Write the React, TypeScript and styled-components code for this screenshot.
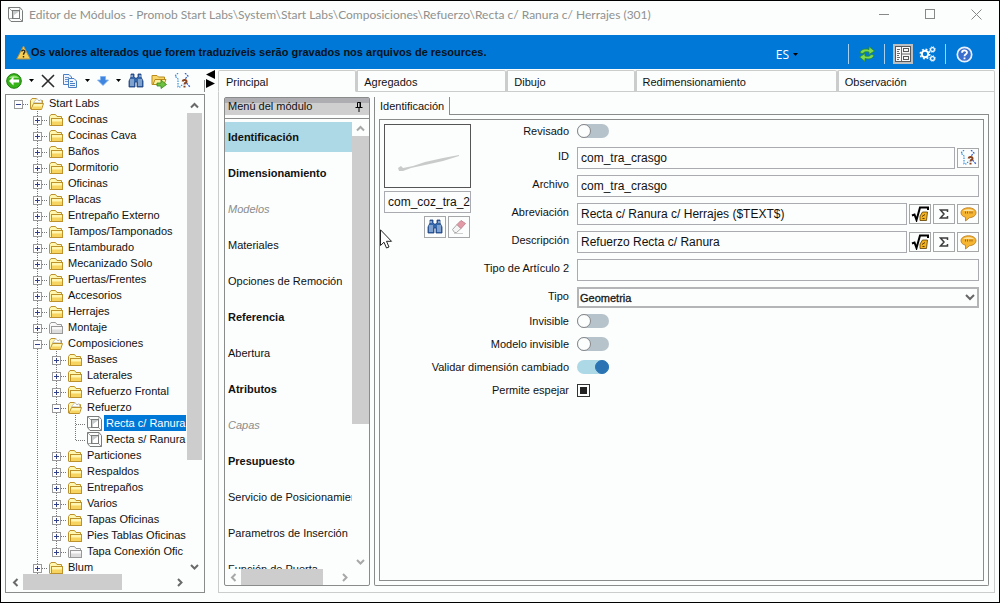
import React, { useState } from "react";
import styled, { createGlobalStyle, css } from "styled-components";

const BG = "#fcfefd";
const LINE = "#8a8c8b";
const SOFT = "#cbcdcc";
const THUMB = "#cdcdcd";
const BLUE = "#0078d7";

const GlobalStyle = createGlobalStyle`
  *, *::before { box-sizing: border-box; }
  body { margin: 0; background: ${BG}; }
  body, button, input, select {
    font-family: "Liberation Sans", Arial, sans-serif;
    font-size: 11px;
    color: #111;
  }
  button { padding: 0; border: 0; background: none; }
  svg { display: block; flex: none; }
`;

/* ---------- window frame ---------- */

const Window = styled.div`
  height: 100vh;
  min-height: 400px;
  display: flex;
  flex-direction: column;
  border: 1px solid #000;
  background: ${BG};
  overflow: hidden;
`;

const TitleBar = styled.header`
  flex: none;
  height: 34px;
  display: flex;
  align-items: flex-start;
  padding-left: 7px;
`;

const Title = styled.h1`
  flex: 1;
  margin: 0 0 0 6px;
  font: 400 12px/28px Lato, sans-serif;
  color: #8f9190;
  white-space: nowrap;
  overflow: hidden;
`;

const TitleIcon = styled.span`
  padding-top: 6px;
`;

const WindowButton = styled.button`
  width: 46px;
  height: 26px;
  display: flex;
  align-items: center;
  justify-content: center;
`;

const Banner = styled.div`
  flex: none;
  height: 34px;
  margin: 0 4px;
  padding: 0 21px 0 11px;
  display: flex;
  align-items: center;
  background: ${BLUE};
`;

const BannerText = styled.strong`
  flex: 1;
  font-size: 11px;
  white-space: nowrap;
  color: #06121c;
`;

const LanguageButton = styled.button`
  display: flex;
  align-items: center;
  gap: 4px;
  margin-right: 43px;
  padding-top: 5px;
  color: #fff;
  font: 12px/18px "Open Sans", sans-serif;
`;

const BannerButton = styled.button<{ $active?: boolean }>`
  width: 20px;
  height: 20px;
  margin-top: 4px;
  display: flex;
  align-items: center;
  justify-content: center;
  background: ${(p) => (p.$active ? "#bcc0c2" : "none")};
  margin-right: ${(p) => (p.$active ? 5 : 0)}px;
`;

const BannerRule = styled.span`
  width: 1px;
  height: 20px;
  margin: 4px 8px 0 7px;
  background: #a8d0f0;
`;

const Body = styled.main`
  flex: 1;
  min-height: 0;
  display: flex;
  padding: 0 4px 9px;
`;

/* ---------- left pane ---------- */

const LeftPane = styled.section`
  flex: none;
  width: 200px;
  display: flex;
  flex-direction: column;
`;

const Toolbar = styled.div`
  flex: none;
  height: 25px;
  display: flex;
  align-items: center;
  padding: 0 0 2px 1px;
`;

const ToolbarRule = styled.span`
  align-self: flex-end;
  margin-left: auto;
  width: 1px;
  height: 12px;
  background: ${LINE};
`;

const ToolButton = styled.button<{ $gap?: number }>`
  display: flex;
  align-items: center;
  margin-right: ${(p) => p.$gap ?? 7}px;
`;

const Frame = styled.div`
  flex: 1;
  min-width: 0;
  min-height: 0;
  display: flex;
  flex-direction: column;
  border: 1px solid ${LINE};
`;

const TreeFrame = styled(Frame)`
  padding: 0 2px 2px 1px;
`;

const ScrollRow = styled.div`
  flex: 1;
  min-height: 0;
  display: flex;
`;

const Viewport = styled.div`
  flex: 1;
  min-width: 0;
  overflow: hidden;
`;

const TreeList = styled.ul`
  list-style: none;
  margin: 0;
  padding: 0 1px 0 2px;
`;

const TreeRow = styled.li`
  height: 16px;
  display: flex;
  white-space: nowrap;
  overflow: hidden;
`;

const TreeIcon = styled.span`
  margin: 1px 3px 0 2px;
`;

const TreeText = styled.span<{ $selected?: boolean; $leaf?: boolean }>`
  line-height: 16px;
  height: 16px;
  padding: 0 0 0 2px;
  margin-left: ${(p) => (p.$leaf ? "-1px" : "0")};
  ${(p) =>
    p.$selected &&
    css`
      background: ${BLUE};
      color: #fff;
      flex: 1;
    `}
`;

/* ---------- scroll bars ---------- */

const Bar = styled.div<{ $horizontal?: boolean; $inset?: number; $narrow?: boolean }>`
  flex: none;
  display: flex;
  align-items: stretch;
  flex-direction: ${(p) => (p.$horizontal ? "row" : "column")};
  ${(p) =>
    p.$horizontal
      ? css`height: 16px; margin-right: ${p.$inset ?? 0}px;`
      : css`width: ${p.$narrow ? 15 : 17}px; margin-top: ${p.$inset ?? 0}px;`}
`;

const BarArrow = styled.span`
  min-width: 15px;
  flex: 0 0 16px;
  display: flex;
  align-items: center;
  justify-content: center;
`;

const Track = styled.span<{ $horizontal?: boolean }>`
  flex: 1;
  display: flex;
  flex-direction: ${(p) => (p.$horizontal ? "row" : "column")};
`;

const Thumb = styled.span<{ $size: number }>`
  flex: 0 0 ${(p) => p.$size}%;
  background: ${THUMB};
`;

const ARROWS = {
  up: "M1 6.5 4.5 3 8 6.5",
  down: "M1 3 4.5 6.5 8 3",
  left: "M6.5 1 3 4.5 6.5 8",
  right: "M3 1 6.5 4.5 3 8",
};

function Arrow({ to, color }: { to: keyof typeof ARROWS; color: string }) {
  return (
    <BarArrow>
      <svg width="9" height="9" viewBox="0 0 9 9">
        <path d={ARROWS[to]} fill="none" stroke={color} strokeWidth="2" />
      </svg>
    </BarArrow>
  );
}

type ScrollBarProps = { horizontal?: boolean; narrow?: boolean; size: number; inset?: number; color?: string };

function ScrollBar({ horizontal, narrow, size, inset, color = "#6a6a6a" }: ScrollBarProps) {
  return (
    <Bar $horizontal={horizontal} $inset={inset} $narrow={narrow} aria-hidden="true">
      <Arrow to={horizontal ? "left" : "up"} color={color} />
      <Track $horizontal={horizontal}>
        <Thumb $size={size} />
      </Track>
      <Arrow to={horizontal ? "right" : "down"} color={color} />
    </Bar>
  );
}

/* ---------- splitter ---------- */

const Splitter = styled.div`
  flex: none;
  width: 13px;
  padding: 1px 0 0 1px;
`;

/* ---------- right pane ---------- */

const RightPane = styled.section`
  flex: 1;
  min-width: 0;
  display: flex;
  flex-direction: column;
  padding-top: 1px;
`;

const Tabs = styled.div`
  flex: none;
  display: flex;
  height: 22px;
`;

const Tab = styled.button<{ $weight: number; $active?: boolean }>`
  flex: ${(p) => p.$weight} 1 0;
  min-width: 0;
  padding: 2px 0 0 ${(p) => (p.$active ? 7 : 6)}px;
  text-align: left;
  white-space: nowrap;
  overflow: hidden;
  border: 1px solid ${SOFT};
  border-left-width: ${(p) => (p.$active ? 1 : 2)}px;
  border-bottom-color: ${(p) => (p.$active ? "transparent" : SOFT)};
  border-radius: 2px 2px 0 0;
`;

const TabBody = styled.div`
  flex: 1;
  min-height: 0;
  display: flex;
  gap: 4px;
  padding: 5px 5px 6px;
  border: 1px solid ${SOFT};
  border-top: 0;
`;

const MenuFrame = styled(Frame)`
  flex: 0 0 146px;
  border-radius: 2px;
`;

const MenuHeader = styled.h2`
  flex: none;
  height: 17px;
  margin: 0 0 3px;
  padding: 0 6px 0 3px;
  display: flex;
  align-items: center;
  justify-content: space-between;
  font-size: 11px;
  font-weight: 400;
  line-height: 19px;
  background: linear-gradient(#aeaeb2 5px, #cfcfcf 5px);
`;

const MenuScroll = styled(ScrollRow)`
  border-top: 1px solid ${LINE};
`;

const MenuList = styled.nav`
  display: flex;
  flex-direction: column;
  gap: 6px;
  padding-top: 3px;
`;

const MenuItem = styled.a<{ $kind?: string; $current?: boolean }>`
  flex: none;
  height: 30px;
  padding-left: 3px;
  line-height: 30px;
  white-space: nowrap;
  text-decoration: none;
  color: ${(p) => (p.$kind === "off" ? "#8b8d8c" : "#111")};
  font-style: ${(p) => (p.$kind === "off" ? "italic" : "normal")};
  font-weight: ${(p) => (p.$kind === "bold" ? 700 : 400)};
  background: ${(p) => (p.$current ? "#add8e6" : "none")};
`;

const Page = styled.div`
  flex: 1;
  min-width: 0;
  display: flex;
  flex-direction: column;
`;

const PageTabs = styled.div`
  flex: none;
  height: 18px;
  display: flex;
`;

const PageTab = styled.button`
  padding: 0 5px;
  border: solid ${LINE};
  border-width: 0 1px;
`;

const PageTabRule = styled.span`
  flex: 1;
  border-bottom: 1px solid ${LINE};
`;

const PageBody = styled.div`
  flex: 1;
  min-height: 0;
  display: flex;
  padding: 4px;
  border: solid ${LINE};
  border-width: 0 1px 1px;
  border-radius: 0 0 2px 2px;
`;

const Sheet = styled.div`
  position: relative;
  flex: 1;
  min-width: 0;
  display: grid;
  grid-template-columns: 189px 1fr;
  align-content: start;
  border: 1px solid ${LINE};
`;

/* ---------- preview ---------- */

const Preview = styled.div`
  grid-area: 1 / 1 / 2 / 2;
  width: 91px;
  padding: 4px 0 0 4px;
  display: flex;
  flex-direction: column;
  gap: 3px;
  z-index: 1;
  align-self: start;
`;

const Thumbnail = styled.div`
  height: 64px;
  border: 1px solid #555;
`;

const ButtonRow = styled.div`
  display: flex;
  gap: 2px;
  justify-content: flex-end;
  padding-right: 1px;
`;

const IconButton = styled.button`
  flex: none;
  width: 22px;
  height: 20px;
  display: flex;
  align-items: center;
  justify-content: center;
  border: 1px solid #a5a7a8;
  background: ${BG};
`;

const PreviewButton = styled(IconButton)`
  height: 22px;
`;

const Pointer = styled.div`
  position: absolute;
  left: 0;
  top: 109px;
  z-index: 2;
`;

/* ---------- form ---------- */

const Form = styled.form`
  grid-area: 1 / 1 / 2 / 3;
  display: flex;
  flex-direction: column;
`;

const FieldGroup = styled.div`
  display: flex;
  flex-direction: column;
  gap: 6px;
  padding: 4px 0 1px;
`;

const FormRow = styled.div<{ $toggle?: boolean }>`
  display: grid;
  grid-template-columns: 189px 1fr;
  column-gap: 8px;
  padding-right: 4px;
  height: 22px;
  margin-bottom: ${(p) => (p.$toggle ? 1 : 0)}px;
  align-items: ${(p) => (p.$toggle ? "center" : "start")};
`;

const Label = styled.label`
  text-align: right;
  line-height: 18px;
  white-space: nowrap;
`;

const Controls = styled.div`
  display: flex;
  align-items: center;
  gap: 2px;
  min-width: 0;
`;

const TextBox = styled.input`
  flex: 1;
  width: 100%;
  min-width: 0;
  height: 22px;
  padding: 0 3px;
  border: 1px solid #a9abb0;
  background: ${BG};
  font-size: 12px;
  outline: none;
`;

const ImageName = styled(TextBox)`
  flex: none;
  padding-right: 0;
`;

const SelectWrap = styled.div`
  flex: 1;
  display: grid;
  align-items: center;
  & > * { grid-area: 1 / 1; }
  & > svg { justify-self: end; margin-right: 4px; pointer-events: none; }
`;

const Select = styled.select`
  appearance: none;
  width: 100%;
  height: 21px;
  padding: 0 1px;
  border: 2px solid #b3b5b6;
  border-radius: 0;
  background: ${BG};
  font-size: 11px;
  -webkit-text-stroke: 0.3px #222;
`;

const Switch = styled.input`
  appearance: none;
  margin: 0;
  width: 32px;
  height: 14px;
  border-radius: 7px;
  display: flex;
  background: #b7c3cb;
  &::before {
    content: "";
    width: 14px;
    height: 14px;
    border-radius: 7px;
    border: 1px solid #848688;
    background: ${BG};
  }
  &:checked {
    background: #add8e6;
    justify-content: flex-end;
  }
  &:checked::before {
    border-color: #2a74b4;
    background: #2a74b4;
  }
`;

const TriState = styled.input`
  appearance: none;
  margin: 0;
  width: 13px;
  height: 13px;
  border: 1px solid #333;
  display: grid;
  place-items: center;
  &::before {
    content: "";
    width: 7px;
    height: 7px;
    background: #222;
  }
`;

/* ---------- icons ---------- */

const Caret = () => (
  <svg width="5" height="3" viewBox="0 0 5 3">
    <path d="M0 0H5L2.5 3Z" fill="#000" />
  </svg>
);

const ModuleIcon = () => (
  <svg width="15" height="15" viewBox="0 0 15 15" fill="none" stroke="#7a7c7c">
    <path d="M.5.500H12L14.500 3.500V14.500H3L.5 11.500Z" fill="#fbfcfc" />
    <path d="M.5.500 4.500 4.500M12 .5 11.500 4M.5 11.500 4.500 11.500M14.500 14.500 11.500 11.500" strokeWidth=".7" />
    <rect x="4.500" y="3.500" width="7" height="8" fill="#c9cccc" />
    <path d="M6 11V8L11 4.500V11Z" fill="#fff" stroke="none" />
  </svg>
);

const Folder = ({ open, gray }: { open?: boolean; gray?: boolean }) => {
  const edge = gray ? "#989898" : "#bd922c";
  const top = gray ? "#f9f9f9" : "#fff6b0";
  const low = gray ? "#dcdcdc" : "#f7d35f";
  return (
    <svg width="14" height="15" viewBox="0 0 14 15">
      <path d="M.5 13V4.500L2 2.500H6.500L8 4.500H12.500V7" fill={top} stroke={edge} />
      {open ? (
        <>
          <path d="M3.500 6.500 7 2.500 9 5 11 3.500 12 7Z" fill="#fff" stroke="#b5b5b5" strokeWidth=".7" />
          <path d="M1 13.500 3.500 7.500H13.500L11.500 13.500Z" fill={top} stroke={edge} />
          <path d="M2 13 3.200 10.500H12L11.200 13Z" fill={low} />
        </>
      ) : (
        <>
          <rect x="2.500" y="6.500" width="11" height="7" fill={top} stroke={edge} />
          <rect x="3" y="9.500" width="10" height="3.500" fill={low} />
          <path d="M.5 13.500H2.500" stroke={edge} />
        </>
      )}
    </svg>
  );
};

const Binoculars = () => (
  <svg width="16" height="16" viewBox="0 0 16 16">
    <path d="M3 1h3v3l1 1h2l1-1V1h3v3l2 4v6H9V9H7v5H1V8l2-4Z" fill="#3468ad" stroke="#1c3e78" strokeWidth=".8" />
    <path d="M3 6v7M5 6v7M11 6v7M13 6v7" stroke="#dbe8f8" strokeWidth=".9" />
    <path d="M4 2v2M12 2v2" stroke="#cfe0f4" />
  </svg>
);

const Branches = () => (
  <svg width="17" height="16" viewBox="0 0 17 16" fill="none">
    <path d="M4 0 1 3 4 6V14H6L9 11" stroke="#2f8fe0" strokeWidth="1.200" strokeDasharray="1.500 1" />
    <path d="M11 0 14 3 10 7M12.500 10 16 14" stroke="#3260d8" strokeWidth="1.200" strokeDasharray="2 1" />
    <path d="M8.500 8.500C9 6.500 13 6.500 12.500 8.800C12.300 10 10.500 9.500 10.500 11.500M10.500 12.800V14.500" stroke="#8a4420" strokeWidth="2" />
  </svg>
);

const BackIcon = () => (
  <svg width="16" height="16" viewBox="0 0 16 16">
    <circle cx="8" cy="8" r="7.300" fill="#35b318" stroke="#1b7d0c" />
    <path d="M3 5C5 1.500 11 1.500 13 5Z" fill="#8fe070" />
    <path d="M3 8 7.500 3.500V6.500H13V9.500H7.500V12.500Z" fill="#fff" />
  </svg>
);

const CopyIcon = () => (
  <svg width="16" height="16" viewBox="0 0 16 16" fill="#eef5ff" stroke="#4a7fc4">
    <path d="M1.500 1.500H7L9.500 4V11.500H1.500Z" />
    <path d="M3 4.500H7M3 6.500H7M3 8.500H6" strokeWidth=".8" />
    <path d="M6.500 5.500H12L14.500 8V14.500H6.500Z" />
    <path d="M8 8.500H11M8 10.500H13M8 12.500H13" />
  </svg>
);

const SendFolder = () => (
  <svg width="16" height="16" viewBox="0 0 16 16">
    <path d="M1 11.500V2.500H6L7.500 4H13.500V11.500Z" fill="#f8d768" stroke="#b98a1d" />
    <path d="M2 11.500 4 6.500H15L13 11.500Z" fill="#fff0a0" stroke="#b98a1d" />
    <path d="M6 10H10V7L15.500 11.500 10 15.500V13H6Z" fill="#6fc040" stroke="#2f8a18" strokeWidth=".8" />
  </svg>
);

const WarningIcon = () => (
  <svg width="15" height="15" viewBox="0 0 15 15">
    <path d="M7.500 1 14.300 14H.7Z" fill="#f6cf55" stroke="#a88d4d" strokeLinejoin="round" />
    <path d="M5.800 6.500C6 4.500 9 4.800 8.800 6.800C8.600 8 7.500 7.800 7.500 9.800M7.500 11V12.500" fill="none" stroke="#2e2a1a" strokeWidth="1.400" />
  </svg>
);

const RefreshIcon = () => (
  <svg width="16" height="16" viewBox="0 0 16 16" fill="#7fda4f" stroke="#2a8a28" strokeWidth=".8">
    <path d="M1 7C2 3 6 2.500 10 3.500V.6L15.500 5 10 8.500V6C7 5.500 5 5.500 4 7.500Z" />
    <path d="M15 9C14 13 10 13.500 6 12.500V15.400L.5 11 6 7.500V10C9 10.500 11 10.500 12 8.500Z" />
  </svg>
);

const PropsIcon = () => (
  <svg width="16" height="16" viewBox="0 0 16 16" fill="none" stroke="#5a5a5a">
    <rect x=".5" y=".5" width="15" height="15" fill="#fafafa" />
    <path d="M2 3.500H5M2 5.500H4M2 7.500H5M2 9.500H4M2 11.500H5M2 13.500H4M6.500 1V15M7 8H15" strokeWidth=".9" />
    <rect x="8.500" y="2.500" width="5" height="3" />
    <rect x="8.500" y="10.500" width="5" height="3" />
  </svg>
);

const GearsIcon = () => (
  <svg width="18" height="16" viewBox="0 0 18 16" fill="none" stroke="#fff">
    <circle cx="6" cy="8" r="3.200" strokeWidth="2" />
    <circle cx="6" cy="8" r="4.800" strokeWidth="1.400" strokeDasharray="1.900 1.870" />
    <circle cx="13.500" cy="3.500" r="1.900" strokeWidth="1.200" />
    <circle cx="13.500" cy="3.500" r="2.800" strokeWidth=".9" strokeDasharray="1.200 1" />
    <circle cx="13.500" cy="12.500" r="1.900" strokeWidth="1.200" />
    <circle cx="13.500" cy="12.500" r="2.800" strokeWidth=".9" strokeDasharray="1.200 1" />
  </svg>
);

const HelpIcon = () => (
  <svg width="17" height="17" viewBox="0 0 17 17" fill="none">
    <circle cx="8.500" cy="8.500" r="7.200" fill="#3a6fd0" stroke="#e8f0fb" strokeWidth="1.700" />
    <path d="M6 6.800C6 3.700 11 3.700 11 6.500C11 8.500 8.500 8.200 8.500 10.300M8.500 11.600V13.200" stroke="#fff" strokeWidth="1.800" />
  </svg>
);

const PinIcon = () => (
  <svg width="8" height="11" viewBox="0 0 8 11" fill="none" stroke="#000">
    <path d="M2.500 6V1.500H5.500V6M5 1V6M.5 6.500H7.500M4 7V11" />
  </svg>
);

const EraserIcon = () => (
  <svg width="16" height="16" viewBox="0 0 16 16">
    <path d="M3 14.500H12" stroke="#cfcfcf" />
    <path d="M1.500 10.500 6 5.500 10 9.500 5.500 13.500H3.500Z" fill="#f5f5f5" stroke="#a9a9a9" />
    <path d="M6 5.500 10 1.500 14.500 4.500 10 9.500Z" fill="#e29aa6" stroke="#c58a94" />
  </svg>
);

const RootIcon = () => (
  <svg width="18" height="16" viewBox="0 0 18 16" fill="none">
    <path d="M1 9.500 3.500 8.500 5.500 14 9 1.500H17V4" stroke="#000" strokeWidth="2" />
    <path d="M9 14.500V10L11.500 6H16.500L15.500 14.500Z" fill="#f4b21c" stroke="#5a3c05" strokeWidth=".8" />
    <path d="M11 10.500 14 8.500M11.500 12.500H13.500" stroke="#5a3c05" />
  </svg>
);

const SigmaIcon = () => (
  <svg width="10" height="10" viewBox="0 0 10 10" fill="none" stroke="#3d3d3d" strokeWidth="1.500">
    <path d="M8.500 3V1H1.500L5 5 1.500 9H8.500V7" />
  </svg>
);

const QuoteIcon = () => (
  <svg width="17" height="15" viewBox="0 0 17 15">
    <path d="M8.500.8C13 .8 16 3 16 5.700S13.200 10.500 9.500 10.700L5.500 14V10.300C2.600 9.500 1 7.800 1 5.700C1 3 4 .8 8.500.8Z" fill="#f6b531" stroke="#b5741a" strokeWidth=".8" />
    <path d="M3 4C5 1.800 12 1.800 14 4Z" fill="#fde3a0" />
    <path d="M5.500 4.500V6.500M7.500 4.500V6.500M10 4.500V6.500M12 4.500V6.500" stroke="#9a5f12" />
  </svg>
);

/* ---------- tree data ---------- */

type Cell = "blank" | "line" | "plus" | "minus" | "leaf" | "root" | "end" | "leafEnd";
type Node = { name: string; cells: Cell[]; icon?: "open" | "gray" | "module"; selected?: boolean };

const top = (name: string, icon?: Node["icon"], cell: Cell = "plus"): Node => ({ name, icon, cells: ["blank", cell] });
const sub = (name: string, icon?: Node["icon"], cell: Cell = "plus"): Node => ({ name, icon, cells: ["blank", "line", cell] });

const NODES: Node[] = [
  { name: "Start Labs", icon: "open", cells: ["root"] },
  top("Cocinas"),
  top("Cocinas Cava"),
  top("Baños"),
  top("Dormitorio"),
  top("Oficinas"),
  top("Placas"),
  top("Entrepaño Externo"),
  top("Tampos/Tamponados"),
  top("Entamburado"),
  top("Mecanizado Solo"),
  top("Puertas/Frentes"),
  top("Accesorios"),
  top("Herrajes"),
  top("Montaje", "gray"),
  top("Composiciones", "open", "minus"),
  sub("Bases"),
  sub("Laterales"),
  sub("Refuerzo Frontal"),
  sub("Refuerzo", "open", "minus"),
  { name: "Recta c/ Ranura", icon: "module", selected: true, cells: ["blank", "line", "line", "leaf"] },
  { name: "Recta s/ Ranura", icon: "module", cells: ["blank", "line", "line", "leafEnd"] },
  sub("Particiones"),
  sub("Respaldos"),
  sub("Entrepaños"),
  sub("Varios"),
  sub("Tapas Oficinas"),
  sub("Pies Tablas Oficinas"),
  sub("Tapa Conexión Ofic", "gray", "end"),
  top("Blum"),
];

function TreeCell({ kind }: { kind: Cell }) {
  const full = "M9.500 0V16";
  const half = "M9.500 0V9";
  const vertical = { line: full, plus: full, minus: full, leaf: full, end: half, leafEnd: half, root: "", blank: "" }[kind];
  const arm = kind !== "line" && kind !== "blank";
  const box = arm && kind !== "leaf" && kind !== "leafEnd";
  return (
    <svg width="19" height="16" viewBox="0 0 19 16" fill="none">
      <g stroke="#777" strokeDasharray="1 1">
        {vertical && <path d={vertical} />}
        {arm && <path d="M10 9.500H19" />}
      </g>
      {box && (
        <>
          <rect x="5.500" y="5.500" width="8" height="8" fill="#fff" stroke="#9a9a9a" />
          <path d={kind === "minus" || kind === "root" ? "M7 9.500H12" : "M7 9.500H12M9.500 7V12"} stroke="#33408c" />
        </>
      )}
    </svg>
  );
}

const MENU: [string, string?][] = [
  ["Identificación", "bold"],
  ["Dimensionamiento", "bold"],
  ["Modelos", "off"],
  ["Materiales"],
  ["Opciones de Remoción"],
  ["Referencia", "bold"],
  ["Abertura"],
  ["Atributos", "bold"],
  ["Capas", "off"],
  ["Presupuesto", "bold"],
  ["Servicio de Posicionamien"],
  ["Parametros de Inserción"],
  ["Función de Puerta"],
];

const TABS: [string, number][] = [
  ["Principal", 129],
  ["Agregados", 141],
  ["Dibujo", 119],
  ["Redimensionamiento", 193],
  ["Observación", 149],
];

function TextRow({ id, label, value, children }: { id: string; label: string; value: string; children?: React.ReactNode }) {
  const [text, setText] = useState(value);
  return (
    <FormRow>
      <Label htmlFor={id}>{label}</Label>
      <Controls>
        <TextBox id={id} value={text} onChange={(e) => setText(e.target.value)} />
        {children}
      </Controls>
    </FormRow>
  );
}

function SwitchRow({ id, label, on }: { id: string; label: string; on?: boolean }) {
  return (
    <FormRow $toggle>
      <Label htmlFor={id}>{label}</Label>
      <Switch id={id} type="checkbox" role="switch" defaultChecked={on} />
    </FormRow>
  );
}

const TextTools = () => (
  <>
    <IconButton type="button" aria-label="Fórmula"><RootIcon /></IconButton>
    <IconButton type="button" aria-label="Sumatoria"><SigmaIcon /></IconButton>
    <IconButton type="button" aria-label="Traducir"><QuoteIcon /></IconButton>
  </>
);

export default function App() {
  return (
    <>
      <GlobalStyle />
      <Window>
        <TitleBar>
          <TitleIcon><ModuleIcon /></TitleIcon>
          <Title>Editor de Módulos - Promob Start Labs\System\Start Labs\Composiciones\Refuerzo\Recta c/ Ranura c/ Herrajes (301)</Title>
          <WindowButton aria-label="Minimizar">
            <svg width="11" height="11" viewBox="0 0 11 11"><path d="M0 5.500H10" stroke="#888" /></svg>
          </WindowButton>
          <WindowButton aria-label="Maximizar">
            <svg width="11" height="11" viewBox="0 0 11 11"><rect x=".5" y=".5" width="9" height="9" fill="none" stroke="#888" /></svg>
          </WindowButton>
          <WindowButton aria-label="Cerrar">
            <svg width="11" height="11" viewBox="0 0 11 11"><path d="M.5.500 10.500 10.500M10.500.500.500 10.500" stroke="#888" /></svg>
          </WindowButton>
        </TitleBar>

        <Banner>
          <WarningIcon />
          <BannerText>Os valores alterados que forem traduzíveis serão gravados nos arquivos de resources.</BannerText>
          <LanguageButton>ES <Caret /></LanguageButton>
          <BannerRule />
          <BannerButton aria-label="Actualizar"><RefreshIcon /></BannerButton>
          <BannerRule />
          <BannerButton aria-label="Propiedades" $active><PropsIcon /></BannerButton>
          <BannerButton aria-label="Configuración"><GearsIcon /></BannerButton>
          <BannerRule />
          <BannerButton aria-label="Ayuda"><HelpIcon /></BannerButton>
        </Banner>

        <Body>
          <LeftPane>
            <Toolbar>
              <ToolButton aria-label="Volver"><BackIcon /></ToolButton>
              <ToolButton aria-label="Opciones de volver"><Caret /></ToolButton>
              <ToolButton aria-label="Eliminar">
                <svg width="14" height="14" viewBox="0 0 14 14"><path d="M1 1 13 13M13 1 1 13" stroke="#2b2b2b" strokeWidth="1.600" /></svg>
              </ToolButton>
              <ToolButton aria-label="Copiar"><CopyIcon /></ToolButton>
              <ToolButton aria-label="Opciones de copiar"><Caret /></ToolButton>
              <ToolButton aria-label="Bajar">
                <svg width="12" height="10" viewBox="0 0 12 10"><path d="M3.500.5H8.500V4H11.500L6 9.500.5 4H3.500Z" fill="#3f86e0" stroke="#7fb0ee" strokeWidth=".8" /></svg>
              </ToolButton>
              <ToolButton aria-label="Opciones de bajar"><Caret /></ToolButton>
              <ToolButton aria-label="Buscar"><Binoculars /></ToolButton>
              <ToolButton aria-label="Exportar"><SendFolder /></ToolButton>
              <ToolButton aria-label="Estructura" $gap={0}><Branches /></ToolButton>
              <ToolbarRule />
            </Toolbar>
            <TreeFrame>
              <ScrollRow>
                <Viewport>
                  <TreeList>
                    {NODES.map((n) => {
                      const leaf = n.icon === "module";
                      return (
                        <TreeRow key={n.name}>
                          {n.cells.map((c, i) => <TreeCell key={i} kind={c} />)}
                          <TreeIcon>{leaf ? <ModuleIcon /> : <Folder open={n.icon === "open"} gray={n.icon === "gray"} />}</TreeIcon>
                          <TreeText $leaf={leaf} $selected={n.selected}>{n.name}</TreeText>
                        </TreeRow>
                      );
                    })}
                  </TreeList>
                </Viewport>
                <ScrollBar narrow size={78} inset={2} />
              </ScrollRow>
              <ScrollBar horizontal size={67} inset={15} />
            </TreeFrame>
          </LeftPane>

          <Splitter>
            <svg width="10" height="20" viewBox="0 0 10 20">
              <path d="M9 0V9L0 4.500Z M0 9V18L9 13.500Z" fill="#000" />
            </svg>
          </Splitter>

          <RightPane>
            <Tabs role="tablist">
              {TABS.map(([name, weight], i) => (
                <Tab key={name} role="tab" aria-selected={i === 0} $weight={weight} $active={i === 0}>{name}</Tab>
              ))}
            </Tabs>
            <TabBody>
              <MenuFrame>
                <MenuHeader>Menú del módulo <PinIcon /></MenuHeader>
                <MenuScroll>
                  <Viewport>
                    <MenuList>
                      {MENU.map(([name, kind], i) => (
                        <MenuItem key={name} href="#" $kind={kind} $current={i === 0}>{name}</MenuItem>
                      ))}
                    </MenuList>
                  </Viewport>
                  <ScrollBar size={69} inset={1} color="#a8a8a8" />
                </MenuScroll>
                <ScrollBar horizontal size={86} inset={17} color="#a8a8a8" />
              </MenuFrame>

              <Page>
                <PageTabs role="tablist">
                  <PageTab role="tab" aria-selected>Identificación</PageTab>
                  <PageTabRule />
                </PageTabs>
                <PageBody>
                  <Sheet>
                    <Preview>
                      <Thumbnail>
                        <svg width="85" height="62" viewBox="0 0 85 62">
                          <path d="M13 43 16 41 18 43 28 41 40 37 58 33 74 30 74 31 58 36 40 40 26 43 18 46 14 46Z" fill="#c9cbca" />
                        </svg>
                      </Thumbnail>
                      <ImageName aria-label="Imagen" defaultValue="com_coz_tra_2" />
                      <ButtonRow>
                        <PreviewButton aria-label="Buscar imagen"><Binoculars /></PreviewButton>
                        <PreviewButton aria-label="Borrar imagen"><EraserIcon /></PreviewButton>
                      </ButtonRow>
                    </Preview>

                    <Form>
                      <SwitchRow id="revisado" label="Revisado" />
                      <FieldGroup>
                        <TextRow id="id" label="ID" value="com_tra_crasgo">
                          <IconButton type="button" aria-label="Ver estructura"><Branches /></IconButton>
                        </TextRow>
                        <TextRow id="archivo" label="Archivo" value="com_tra_crasgo" />
                        <TextRow id="abreviacion" label="Abreviación" value="Recta c/ Ranura c/ Herrajes ($TEXT$)"><TextTools /></TextRow>
                        <TextRow id="descripcion" label="Descripción" value="Refuerzo Recta c/ Ranura"><TextTools /></TextRow>
                        <TextRow id="articulo" label="Tipo de Artículo 2" value="" />
                        <FormRow>
                          <Label htmlFor="tipo">Tipo</Label>
                          <SelectWrap>
                            <Select id="tipo" defaultValue="Geometria"><option>Geometria</option></Select>
                            <svg width="10" height="7" viewBox="0 0 10 7"><path d="M1 1 5 5 9 1" fill="none" stroke="#666" strokeWidth="2" /></svg>
                          </SelectWrap>
                        </FormRow>
                      </FieldGroup>
                      <SwitchRow id="invisible" label="Invisible" />
                      <SwitchRow id="modelo" label="Modelo invisible" />
                      <SwitchRow id="validar" label="Validar dimensión cambiado" on />
                      <FormRow $toggle>
                        <Label htmlFor="espejar">Permite espejar</Label>
                        <TriState id="espejar" type="checkbox" aria-checked="mixed" />
                      </FormRow>
                    </Form>

                    <Pointer aria-hidden="true">
                      <svg width="13" height="21" viewBox="0 0 13 21">
                        <path d="M.5.800V16.500L4 13.200 6.500 19 9 18 6.500 12.300H11.500Z" fill="#fff" stroke="#222" />
                      </svg>
                    </Pointer>
                  </Sheet>
                </PageBody>
              </Page>
            </TabBody>
          </RightPane>
        </Body>
      </Window>
    </>
  );
}
